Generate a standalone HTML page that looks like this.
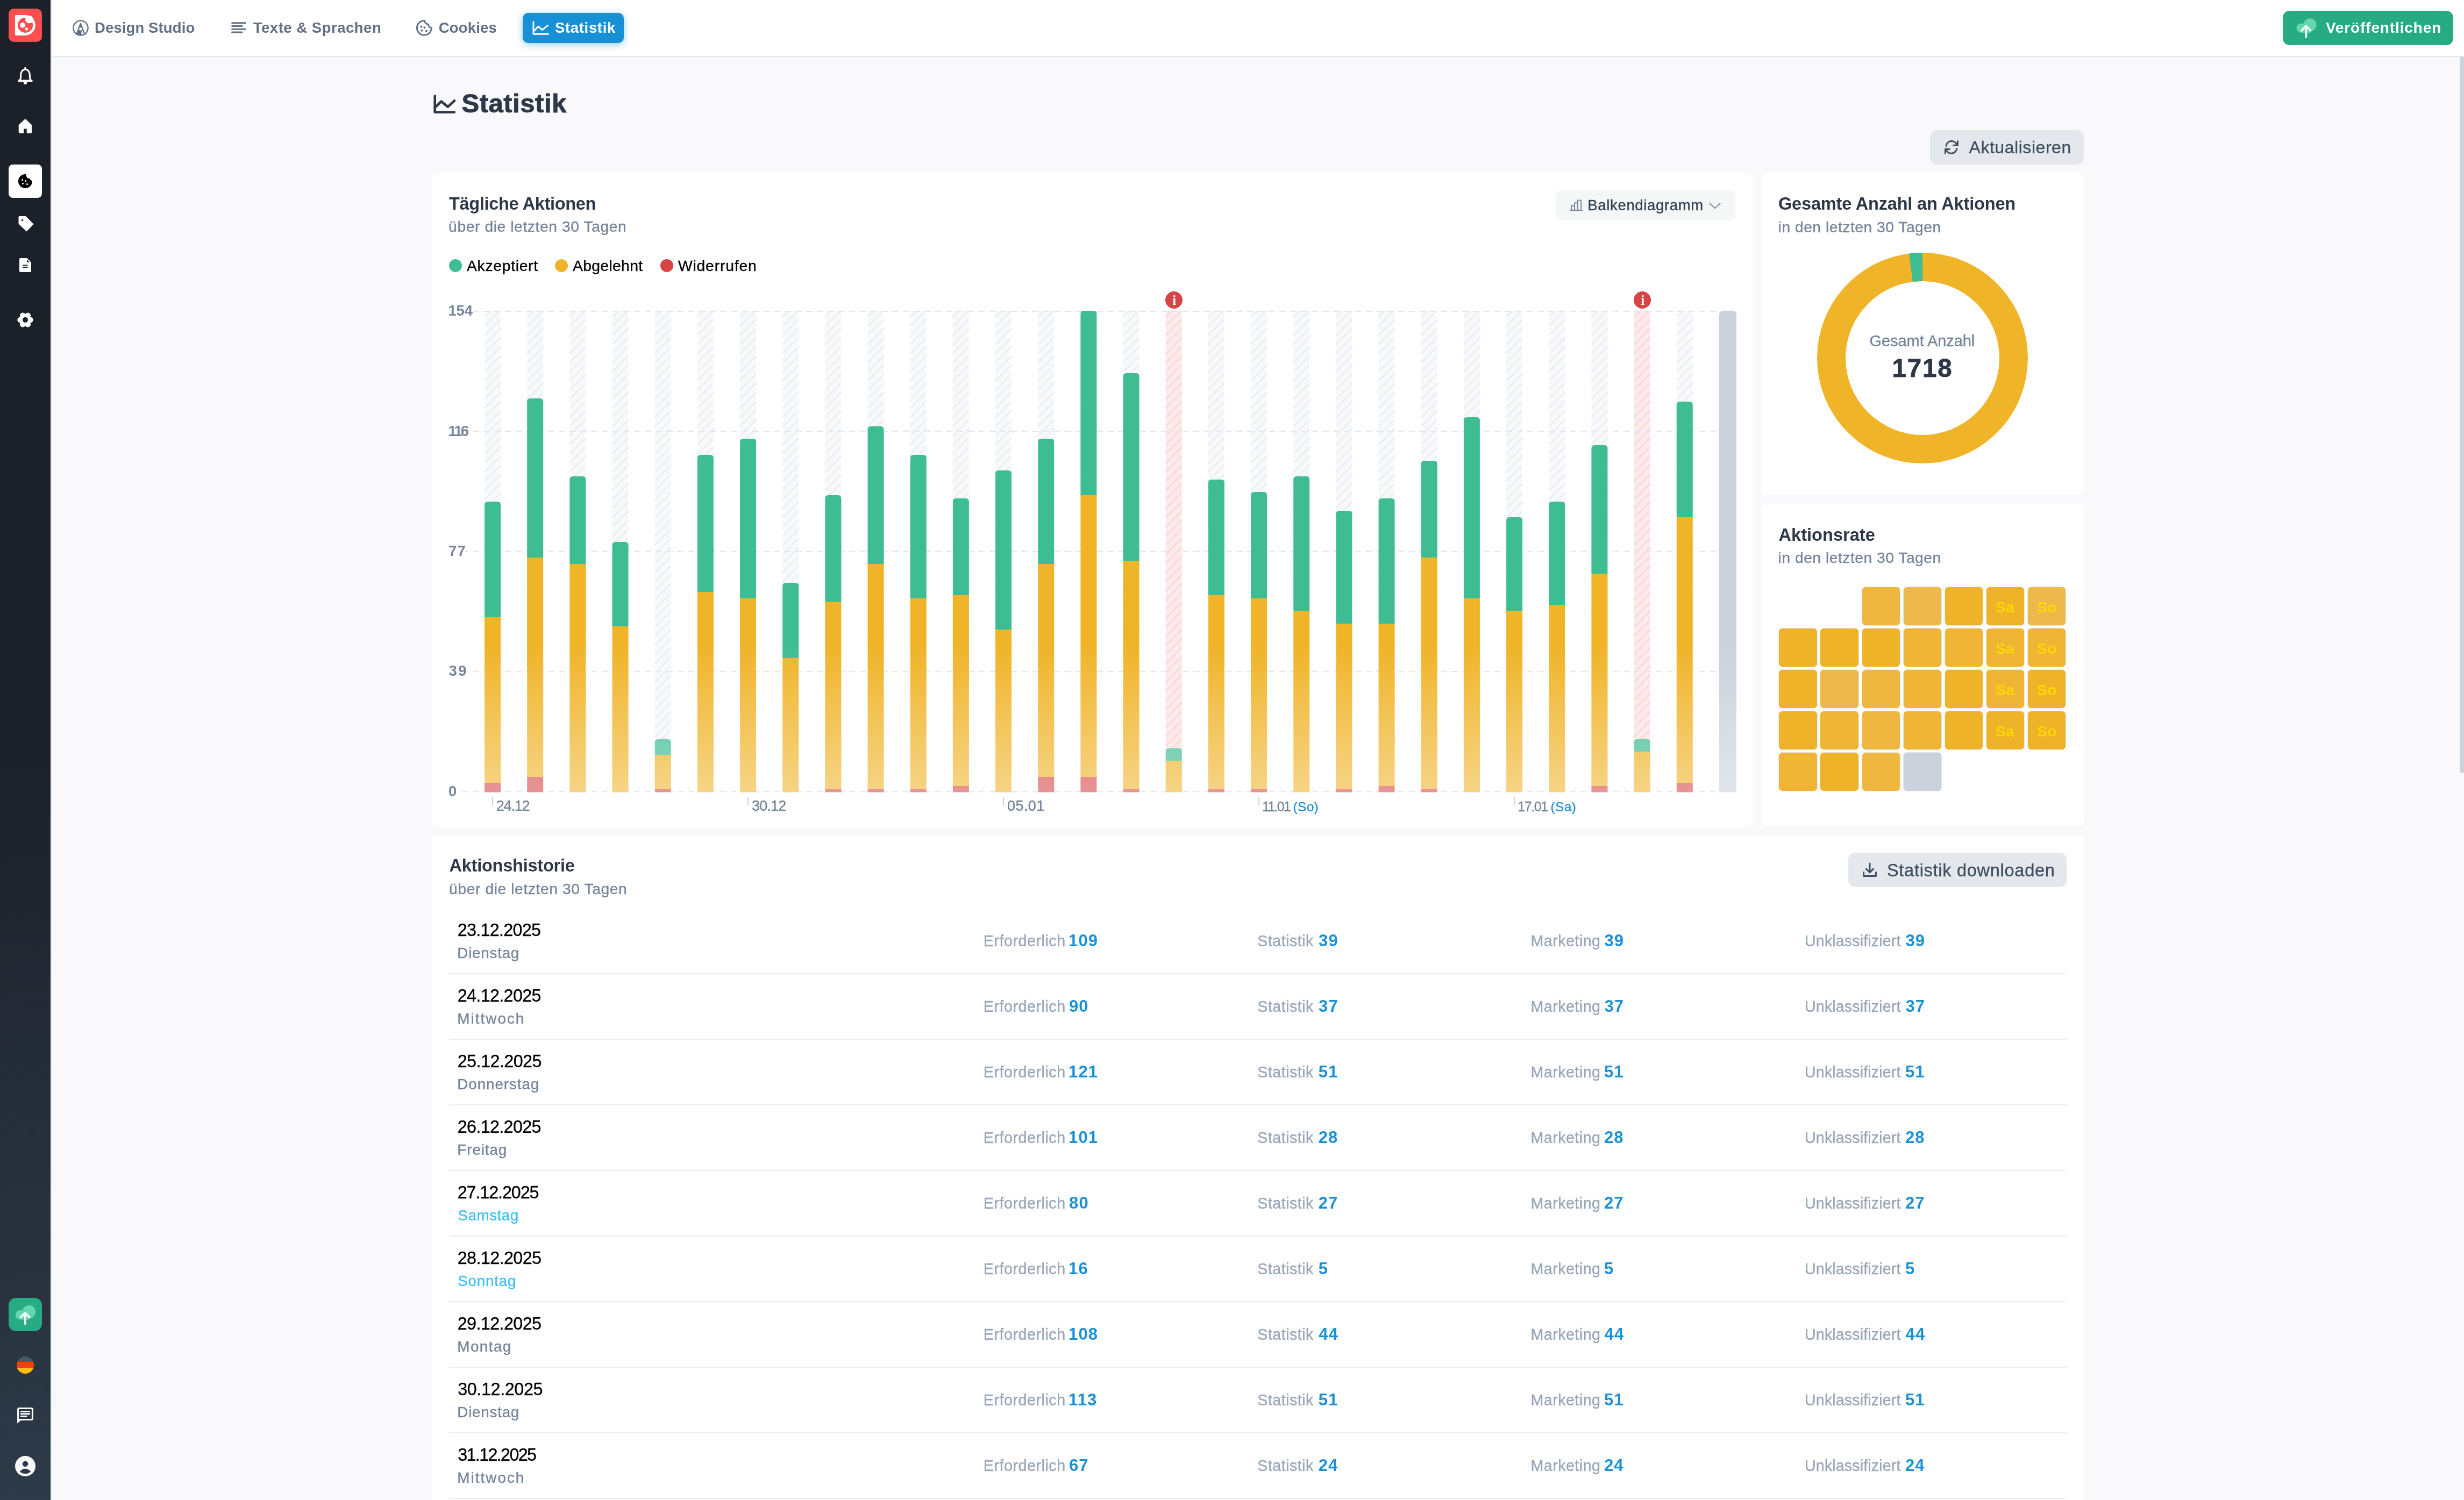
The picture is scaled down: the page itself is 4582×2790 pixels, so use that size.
<!DOCTYPE html>
<html lang="de">
<head>
<meta charset="utf-8">
<title>Statistik</title>
<style>
*{box-sizing:border-box}
html,body{margin:0;padding:0}
body{width:4582px;height:2790px;background:#f9f9fb;font-family:"Liberation Sans", sans-serif;position:relative}
#app{position:absolute;left:0;top:0;width:4582px;height:2790px;overflow:hidden;will-change:transform}
.t{position:absolute;white-space:pre;display:block}
.abs{position:absolute}
.card{position:absolute;background:#fff;border-radius:11px}
#sidebar{position:absolute;left:0;top:0;width:94px;height:2790px;background:linear-gradient(180deg,#1b2029 0%,#1b2029 48%,#2e3a48 100%)}
#sideline{position:absolute;left:94px;top:0;width:2px;height:2790px;background:#e9ecf1}
#topbar{position:absolute;left:96px;top:0;width:4486px;height:104px;background:#fff}
#topline{position:absolute;left:96px;top:104px;width:4486px;height:2px;background:#e2e8f0}
#scroll{position:absolute;left:4574px;top:106px;width:8px;height:1331px;background:#cbd2db}
.btn{position:absolute;border-radius:12px}
svg{position:absolute;overflow:visible}
.serif{font-family:"Liberation Serif",serif}
.sep{position:absolute;left:835px;width:3008px;height:2px;background:#eaedf2}
.cell{position:absolute;width:72.5px;height:72.5px;border-radius:7.5px;border:1.9px solid #e2e8f0}
</style>
</head>
<body>
<div id="app">
<nav id="sidebar"><svg style="left:16px;top:16px" width="62" height="62" viewBox="16 16 62 62">
<rect x="16" y="16" width="62" height="62" rx="10" fill="#fe4f50"/>
<path d="M30.5 28.1H47A18.9 18.9 0 0 1 47 65.9H30.5A2.6 2.6 0 0 1 27.9 63.3V30.7A2.6 2.6 0 0 1 30.5 28.1Z" fill="#fff"/>
<circle cx="47" cy="46.9" r="14.1" fill="#fe4f50"/>
<circle cx="54.4" cy="36.2" r="7.3" fill="#fff"/>
<circle cx="42.1" cy="46.9" r="4.9" fill="#fff"/>
<circle cx="49.5" cy="53.9" r="2.6" fill="#fff"/>
</svg><svg style="left:30px;top:120px" width="34" height="42" viewBox="30 120 34 42">
<circle cx="47" cy="126.6" r="1.9" fill="#fff"/>
<path d="M35.6 150.4Q38.6 147.6 38.6 143.5V139.5A8.4 10.6 0 0 1 55.4 139.5V143.5Q55.4 147.6 58.4 150.4" fill="none" stroke="#fff" stroke-width="3"/>
<rect x="33.5" y="148.5" width="27" height="3.5" rx="0.8" fill="#fff"/>
<circle cx="47" cy="153.8" r="3.2" fill="#fff"/>
</svg><svg style="left:30px;top:218px" width="34" height="34" viewBox="30 218 34 34">
<path d="M47 221.6 58.8 232.4V245.6A1.8 1.8 0 0 1 57 247.4H50.2V239H43.8V247.4H37A1.8 1.8 0 0 1 35.2 245.6V232.4Z" fill="#fff" stroke="#fff" stroke-width="1" stroke-linejoin="round"/>
</svg><svg style="left:16px;top:306px" width="62" height="62" viewBox="16 306 62 62">
<rect x="16" y="306" width="62" height="62" rx="8" fill="#fff"/>
<mask id="ckm" maskUnits="userSpaceOnUse" x="30" y="320" width="36" height="36">
<rect x="30" y="320" width="36" height="36" fill="#fff"/>
<circle cx="54.8" cy="325.6" r="6.4" fill="#000"/>
<circle cx="60.2" cy="331.6" r="4.6" fill="#000"/>
</mask>
<circle cx="47" cy="337" r="13" fill="#000" mask="url(#ckm)"/>
<circle cx="41.5" cy="334.5" r="1.6" fill="#fff"/><circle cx="47.5" cy="336.5" r="1.6" fill="#fff"/>
<circle cx="42.5" cy="341.5" r="1.6" fill="#fff"/><circle cx="50.5" cy="342.5" r="1.6" fill="#fff"/>
</svg><svg style="left:30px;top:398px" width="36" height="36" viewBox="30 398 36 36">
<path d="M36 402.5H48L62 417 49.5 430 35 416.5V403.5A1 1 0 0 1 36 402.5Z" fill="#fff" stroke="#fff" stroke-width="1" stroke-linejoin="round"/>
<circle cx="41.5" cy="409.5" r="1.7" fill="#1b2029"/>
</svg><svg style="left:32px;top:476px" width="30" height="34" viewBox="32 476 30 34">
<path d="M38 480H50L58 488V504A2 2 0 0 1 56 506H38A2 2 0 0 1 36 504V482A2 2 0 0 1 38 480Z" fill="#fff"/>
<path d="M50 483V488H55Z" fill="#1b2029"/>
<rect x="42" y="492.5" width="9.5" height="2" fill="#1b2029"/><rect x="42" y="496.5" width="9.5" height="2" fill="#1b2029"/>
</svg><svg style="left:30px;top:578px" width="34" height="34" viewBox="30 578 34 34">
<circle cx="47" cy="595" r="10.5" fill="#fff"/><circle cx="56.40" cy="595.00" r="5.3" fill="#fff"/><circle cx="51.70" cy="603.14" r="5.3" fill="#fff"/><circle cx="42.30" cy="603.14" r="5.3" fill="#fff"/><circle cx="37.60" cy="595.00" r="5.3" fill="#fff"/><circle cx="42.30" cy="586.86" r="5.3" fill="#fff"/><circle cx="51.70" cy="586.86" r="5.3" fill="#fff"/>
<circle cx="47" cy="595" r="5" fill="#1b2029"/>
</svg><svg style="left:16px;top:2414px" width="62" height="62" viewBox="16 2414 62 62">
<rect x="16" y="2414" width="62" height="62" rx="14" fill="#27ab83"/>
<circle cx="53.8" cy="2440" r="12.2" fill="#65d6ad"/><circle cx="37.6" cy="2445.6" r="8.8" fill="#65d6ad"/>
<rect x="37.6" y="2445" width="17" height="9.5" fill="#65d6ad"/>
<path d="M46.7 2462.3V2442M38.6 2450.2 46.7 2441.8 54.8 2450.2" fill="none" stroke="#effcf6" stroke-width="4" stroke-linecap="round" stroke-linejoin="round"/>
</svg><svg style="left:31px;top:2523px" width="32" height="32" viewBox="31 2523 32 32">
<clipPath id="fl"><circle cx="47" cy="2539" r="16"/></clipPath>
<g clip-path="url(#fl)"><rect x="31" y="2523" width="32" height="10.4" fill="#455a64"/><rect x="31" y="2533.4" width="32" height="10.8" fill="#ff3d00"/><rect x="31" y="2544.2" width="32" height="11" fill="#ffc107"/></g>
</svg><svg style="left:30px;top:2616px" width="34" height="34" viewBox="30 2616 34 34">
<rect x="33.6" y="2619.6" width="26.8" height="21" rx="2" fill="none" stroke="#fff" stroke-width="3"/>
<path d="M32.1 2639V2647.8L40 2640.6Z" fill="#fff"/>
<rect x="38" y="2624" width="18" height="2.9" fill="#fff"/><rect x="38" y="2628.4" width="18" height="2.9" fill="#fff"/><rect x="38" y="2633" width="12.2" height="3" fill="#fff"/>
</svg><svg style="left:28px;top:2708px" width="38" height="38" viewBox="28 2708 38 38">
<circle cx="47" cy="2727" r="19" fill="#f7f8fa"/>
<circle cx="47" cy="2722.7" r="5.3" fill="#2d3946"/>
<path d="M36.6 2737.2Q47 2726.4 57.4 2737.2Q47 2745 36.6 2737.2Z" fill="#2d3946"/>
</svg></nav><div id="sideline"></div><header id="topbar"></header><div id="topline"></div><div id="scroll"></div><svg style="left:133px;top:35px" width="34" height="34" viewBox="133 35 34 34">
<circle cx="150" cy="52" r="13.6" fill="none" stroke="#617083" stroke-width="2.3"/>
<path d="M142.8 62.9 149.8 43.9 157.1 62.6" fill="none" stroke="#617083" stroke-width="2.3" stroke-linejoin="round"/>
<path d="M149.8 43.2 146.4 51.2H153.3Z" fill="#617083"/>
<path d="M145 57.4Q147.8 55.6 150.5 58.2Q153.2 55.6 155.6 57.6" fill="none" stroke="#617083" stroke-width="2"/>
<path d="M144.6 57.2Q147.8 55.8 150.5 58.2V65.6A13.6 13.6 0 0 1 141.6 62.8Z" fill="#617083"/>
<path d="M150.5 58V65.4" fill="none" stroke="#617083" stroke-width="2"/>
</svg><span class="t" style="left:175.95px;top:37.62px;font-size:27.5px;line-height:27.5px;color:#617083;font-weight:700;letter-spacing:0.120px;">Design Studio</span><svg style="left:428px;top:40px" width="32" height="24" viewBox="428 40 32 24">
<path d="M431.6 42.7H456.3M431.6 48.5H450M431.6 54.3H456.3M431.6 60H450" stroke="#617083" stroke-width="3.1" stroke-linecap="round" fill="none"/>
</svg><span class="t" style="left:470.75px;top:37.62px;font-size:27.5px;line-height:27.5px;color:#617083;font-weight:700;letter-spacing:0.511px;">Texte &amp; Sprachen</span><svg style="left:772px;top:35px" width="34" height="34" viewBox="772 35 34 34">
<path d="M789.7 38.4A13.5 13.5 0 1 0 802.4 51.6A6.1 6.1 0 0 1 796.5 45.3A6.9 6.9 0 0 1 789.7 38.4Z" fill="none" stroke="#617083" stroke-width="2.9" stroke-linejoin="round"/>
<circle cx="783.3" cy="49.6" r="2" fill="#617083"/><circle cx="789.4" cy="51.2" r="2" fill="#617083"/>
<circle cx="784.3" cy="56.8" r="2" fill="#617083"/><circle cx="792.8" cy="57.8" r="2" fill="#617083"/>
</svg><span class="t" style="left:815.67px;top:37.62px;font-size:27.5px;line-height:27.5px;color:#617083;font-weight:700;letter-spacing:0.198px;">Cookies</span><div class="btn" style="left:972px;top:24px;width:188px;height:56px;background:#1890d5;border-radius:10px;box-shadow:0 3px 14px rgba(24,144,213,.45)"></div><svg style="left:988px;top:37px" width="36" height="30" viewBox="988 37 36 30">
<path d="M991.9 40.6V63.3H1019.5M993 57.5 1001 49.2 1008.3 55.6 1018.7 47.3" fill="none" stroke="#fff" stroke-width="2.9" stroke-linecap="round" stroke-linejoin="round"/>
</svg><span class="t" style="left:1031.95px;top:38.02px;font-size:27.5px;line-height:27.5px;color:#fff;font-weight:700;letter-spacing:0.674px;">Statistik</span><div class="btn" style="left:4245px;top:20px;width:317px;height:64px;background:#27ab83;border-radius:13px"></div><svg style="left:4268px;top:32px" width="42" height="42" viewBox="4268 32 42 42">
<circle cx="4295.4" cy="46.4" r="12.2" fill="#65d6ad"/><circle cx="4279.2" cy="52" r="8.8" fill="#65d6ad"/>
<rect x="4279.2" y="51.4" width="17" height="9.5" fill="#65d6ad"/>
<path d="M4288.3 69V48.6M4280.1 56.8 4288.3 48.2 4296.6 56.8" fill="none" stroke="#effcf6" stroke-width="4" stroke-linecap="round" stroke-linejoin="round"/>
</svg><span class="t" style="left:4324.88px;top:37.60px;font-size:28px;line-height:28px;color:#fff;font-weight:700;letter-spacing:0.864px;">Veröffentlichen</span><svg style="left:803px;top:173px" width="48" height="42" viewBox="803 173 48 42">
<path d="M808.7 178.5V208.8H844.9M810.5 198.6 820.4 188.6 832.9 198.6 845.2 187.3" fill="none" stroke="#2d3748" stroke-width="4.6" stroke-linecap="round" stroke-linejoin="round"/>
</svg><span class="t" style="left:858.43px;top:168.12px;font-size:49px;line-height:49px;color:#2d3748;font-weight:700;letter-spacing:0.530px;-webkit-text-stroke:0.9px #2d3748;">Statistik</span><div class="btn" style="left:3589px;top:242px;width:286px;height:64px;background:#e4e8ed;border-radius:13px"></div><svg style="left:3612px;top:258px" width="34" height="32" viewBox="3612 258 34 32">
<path d="M3619 271.2A10.3 10.3 0 0 1 3638.6 268.6M3638.8 276.6A10.3 10.3 0 0 1 3619.2 279.2" fill="none" stroke="#3d4d5e" stroke-width="3" stroke-linecap="round"/>
<path d="M3640.4 262.6V270.2H3632.8M3617.4 285.2V277.6H3625" fill="none" stroke="#3d4d5e" stroke-width="3" stroke-linecap="round" stroke-linejoin="round"/>
</svg><span class="t" style="left:3661.50px;top:258.21px;font-size:32px;line-height:32px;color:#3d4d5e;letter-spacing:0.545px;-webkit-text-stroke:0.35px #3d4d5e;">Aktualisieren</span><section class="card" style="left:803px;top:322px;width:2456px;height:1216px"></section><span class="t" style="left:835.00px;top:362.79px;font-size:32.5px;line-height:32.5px;color:#2d3748;font-weight:700;letter-spacing:-0.333px;">Tägliche Aktionen</span><span class="t" style="left:834.12px;top:407.43px;font-size:28.2px;line-height:28.2px;color:#75849a;letter-spacing:0.604px;-webkit-text-stroke:0.35px #75849a;">über die letzten 30 Tagen</span><div class="abs" style="left:835px;top:482px;width:24px;height:24px;border-radius:50%;background:#3ebd93"></div><span class="t" style="left:868.00px;top:479.54px;font-size:28.3px;line-height:28.3px;color:#000;letter-spacing:0.699px;-webkit-text-stroke:0.35px #000;">Akzeptiert</span><div class="abs" style="left:1031.5px;top:482px;width:24px;height:24px;border-radius:50%;background:#f0b429"></div><span class="t" style="left:1065.00px;top:479.54px;font-size:28.3px;line-height:28.3px;color:#000;letter-spacing:0.332px;-webkit-text-stroke:0.35px #000;">Abgelehnt</span><div class="abs" style="left:1228px;top:482px;width:24px;height:24px;border-radius:50%;background:#d64545"></div><span class="t" style="left:1260.88px;top:479.54px;font-size:28.3px;line-height:28.3px;color:#000;letter-spacing:0.829px;-webkit-text-stroke:0.35px #000;">Widerrufen</span><div class="btn" style="left:2893px;top:354px;width:334px;height:56px;background:#f5f7f7;border-radius:10px"></div><svg style="left:2917px;top:369px" width="28" height="26" viewBox="2917 369 28 26">
<path d="M2919.6 391H2942.8M2922 391V382.9H2927.9M2927.9 391V377.5H2933.8M2933.8 391V372.4H2940V391" fill="none" stroke="#75849a" stroke-width="1.9" stroke-linejoin="round"/>
</svg><span class="t" style="left:2952.25px;top:367.82px;font-size:27.5px;line-height:27.5px;color:#2f3e4f;letter-spacing:0.668px;-webkit-text-stroke:0.35px #2f3e4f;">Balkendiagramm</span><svg style="left:3176px;top:374px" width="26" height="18" viewBox="3176 374 26 18">
<path d="M3179.6 378.4 3189.1 387.4 3198.6 378.4" fill="none" stroke="#8a99ab" stroke-width="2.2" stroke-linecap="round" stroke-linejoin="round"/>
</svg><svg style="left:803px;top:322px" width="2456" height="1216" viewBox="803 322 2456 1216"><defs>
<pattern id="hg" patternUnits="userSpaceOnUse" width="16.97" height="16.97" patternTransform="translate(0 -5.2)">
<rect width="16.97" height="16.97" fill="#f8f9fb"/><path d="M-2 2 2 -2M-2 18.97 18.97 -2M14.969999999999999 18.97 18.97 14.969999999999999" stroke="#e4e8ec" stroke-width="1.7"/></pattern>
<pattern id="hr" patternUnits="userSpaceOnUse" width="16.97" height="16.97" patternTransform="translate(0 -5.2)">
<rect width="16.97" height="16.97" fill="#fdeaea"/><path d="M-2 2 2 -2M-2 18.97 18.97 -2M14.969999999999999 18.97 18.97 14.969999999999999" stroke="#facdcd" stroke-width="1.7"/></pattern>
<linearGradient id="gG" gradientUnits="userSpaceOnUse" x1="0" y1="1200" x2="0" y2="1473.5"><stop offset="0" stop-color="#3ebd93"/><stop offset="1" stop-color="#91d9c1"/></linearGradient><linearGradient id="gY" gradientUnits="userSpaceOnUse" x1="0" y1="1200" x2="0" y2="1473.5"><stop offset="0" stop-color="#f0b429"/><stop offset="1" stop-color="#f6d485"/></linearGradient><linearGradient id="gR" gradientUnits="userSpaceOnUse" x1="0" y1="1200" x2="0" y2="1473.5"><stop offset="0" stop-color="#d64545"/><stop offset="1" stop-color="#e89595"/></linearGradient><linearGradient id="gS" gradientUnits="userSpaceOnUse" x1="0" y1="1200" x2="0" y2="1473.5"><stop offset="0" stop-color="#cbd2dc"/><stop offset="1" stop-color="#e1e5eb"/></linearGradient>
</defs><g transform="translate(901.00 578)"><rect width="30" height="895.5" fill="url(#hg)"/></g><g transform="translate(980.17 578)"><rect width="30" height="895.5" fill="url(#hg)"/></g><g transform="translate(1059.34 578)"><rect width="30" height="895.5" fill="url(#hg)"/></g><g transform="translate(1138.51 578)"><rect width="30" height="895.5" fill="url(#hg)"/></g><g transform="translate(1217.68 578)"><rect width="30" height="895.5" fill="url(#hg)"/></g><g transform="translate(1296.85 578)"><rect width="30" height="895.5" fill="url(#hg)"/></g><g transform="translate(1376.02 578)"><rect width="30" height="895.5" fill="url(#hg)"/></g><g transform="translate(1455.19 578)"><rect width="30" height="895.5" fill="url(#hg)"/></g><g transform="translate(1534.36 578)"><rect width="30" height="895.5" fill="url(#hg)"/></g><g transform="translate(1613.53 578)"><rect width="30" height="895.5" fill="url(#hg)"/></g><g transform="translate(1692.70 578)"><rect width="30" height="895.5" fill="url(#hg)"/></g><g transform="translate(1771.87 578)"><rect width="30" height="895.5" fill="url(#hg)"/></g><g transform="translate(1851.04 578)"><rect width="30" height="895.5" fill="url(#hg)"/></g><g transform="translate(1930.21 578)"><rect width="30" height="895.5" fill="url(#hg)"/></g><g transform="translate(2009.38 578)"><rect width="30" height="895.5" fill="url(#hg)"/></g><g transform="translate(2088.55 578)"><rect width="30" height="895.5" fill="url(#hg)"/></g><g transform="translate(2167.72 578)"><rect width="30" height="895.5" fill="url(#hr)"/></g><g transform="translate(2246.89 578)"><rect width="30" height="895.5" fill="url(#hg)"/></g><g transform="translate(2326.06 578)"><rect width="30" height="895.5" fill="url(#hg)"/></g><g transform="translate(2405.23 578)"><rect width="30" height="895.5" fill="url(#hg)"/></g><g transform="translate(2484.40 578)"><rect width="30" height="895.5" fill="url(#hg)"/></g><g transform="translate(2563.57 578)"><rect width="30" height="895.5" fill="url(#hg)"/></g><g transform="translate(2642.74 578)"><rect width="30" height="895.5" fill="url(#hg)"/></g><g transform="translate(2721.91 578)"><rect width="30" height="895.5" fill="url(#hg)"/></g><g transform="translate(2801.08 578)"><rect width="30" height="895.5" fill="url(#hg)"/></g><g transform="translate(2880.25 578)"><rect width="30" height="895.5" fill="url(#hg)"/></g><g transform="translate(2959.42 578)"><rect width="30" height="895.5" fill="url(#hg)"/></g><g transform="translate(3038.59 578)"><rect width="30" height="895.5" fill="url(#hr)"/></g><g transform="translate(3117.76 578)"><rect width="30" height="895.5" fill="url(#hg)"/></g><path d="M879.9 579.00H3192" stroke="#e2e7ee" stroke-width="2" stroke-dasharray="12 8" stroke-dashoffset="0.9" fill="none"/><path d="M872 802.40H3192" stroke="#e2e7ee" stroke-width="2" stroke-dasharray="12 8" stroke-dashoffset="13.0" fill="none"/><path d="M865 1025.80H3192" stroke="#e2e7ee" stroke-width="2" stroke-dasharray="12 8" stroke-dashoffset="6.0" fill="none"/><path d="M869 1249.20H3192" stroke="#e2e7ee" stroke-width="2" stroke-dasharray="12 8" stroke-dashoffset="10.0" fill="none"/><path d="M855 1472.60H3192" stroke="#e2e7ee" stroke-width="2" stroke-dasharray="12 8" stroke-dashoffset="16.0" fill="none"/><g><path d="M901.00 1148V939Q901.00 933 907.00 933H925.00Q931.00 933 931.00 939V1148Z" fill="url(#gG)"/><rect x="901.00" y="1148" width="30" height="308" fill="url(#gY)"/><rect x="901.00" y="1456" width="30" height="17.5" fill="url(#gR)"/><path d="M980.17 1037V747Q980.17 741 986.17 741H1004.17Q1010.17 741 1010.17 747V1037Z" fill="url(#gG)"/><rect x="980.17" y="1037" width="30" height="408" fill="url(#gY)"/><rect x="980.17" y="1445" width="30" height="28.5" fill="url(#gR)"/><path d="M1059.34 1049V892Q1059.34 886 1065.34 886H1083.34Q1089.34 886 1089.34 892V1049Z" fill="url(#gG)"/><rect x="1059.34" y="1049" width="30" height="424.5" fill="url(#gY)"/><path d="M1138.51 1165V1014Q1138.51 1008 1144.51 1008H1162.51Q1168.51 1008 1168.51 1014V1165Z" fill="url(#gG)"/><rect x="1138.51" y="1165" width="30" height="308.5" fill="url(#gY)"/><path d="M1217.68 1404V1381Q1217.68 1375 1223.68 1375H1241.68Q1247.68 1375 1247.68 1381V1404Z" fill="url(#gG)"/><rect x="1217.68" y="1404" width="30" height="64" fill="url(#gY)"/><rect x="1217.68" y="1468" width="30" height="5.5" fill="url(#gR)"/><path d="M1296.85 1101V852Q1296.85 846 1302.85 846H1320.85Q1326.85 846 1326.85 852V1101Z" fill="url(#gG)"/><rect x="1296.85" y="1101" width="30" height="372.5" fill="url(#gY)"/><path d="M1376.02 1113V822Q1376.02 816 1382.02 816H1400.02Q1406.02 816 1406.02 822V1113Z" fill="url(#gG)"/><rect x="1376.02" y="1113" width="30" height="360.5" fill="url(#gY)"/><path d="M1455.19 1224V1090Q1455.19 1084 1461.19 1084H1479.19Q1485.19 1084 1485.19 1090V1224Z" fill="url(#gG)"/><rect x="1455.19" y="1224" width="30" height="249.5" fill="url(#gY)"/><path d="M1534.36 1119V927Q1534.36 921 1540.36 921H1558.36Q1564.36 921 1564.36 927V1119Z" fill="url(#gG)"/><rect x="1534.36" y="1119" width="30" height="349" fill="url(#gY)"/><rect x="1534.36" y="1468" width="30" height="5.5" fill="url(#gR)"/><path d="M1613.53 1049V799Q1613.53 793 1619.53 793H1637.53Q1643.53 793 1643.53 799V1049Z" fill="url(#gG)"/><rect x="1613.53" y="1049" width="30" height="419" fill="url(#gY)"/><rect x="1613.53" y="1468" width="30" height="5.5" fill="url(#gR)"/><path d="M1692.70 1113V852Q1692.70 846 1698.70 846H1716.70Q1722.70 846 1722.70 852V1113Z" fill="url(#gG)"/><rect x="1692.70" y="1113" width="30" height="355" fill="url(#gY)"/><rect x="1692.70" y="1468" width="30" height="5.5" fill="url(#gR)"/><path d="M1771.87 1107V933Q1771.87 927 1777.87 927H1795.87Q1801.87 927 1801.87 933V1107Z" fill="url(#gG)"/><rect x="1771.87" y="1107" width="30" height="355" fill="url(#gY)"/><rect x="1771.87" y="1462" width="30" height="11.5" fill="url(#gR)"/><path d="M1851.04 1171V881Q1851.04 875 1857.04 875H1875.04Q1881.04 875 1881.04 881V1171Z" fill="url(#gG)"/><rect x="1851.04" y="1171" width="30" height="302.5" fill="url(#gY)"/><path d="M1930.21 1049V822Q1930.21 816 1936.21 816H1954.21Q1960.21 816 1960.21 822V1049Z" fill="url(#gG)"/><rect x="1930.21" y="1049" width="30" height="396" fill="url(#gY)"/><rect x="1930.21" y="1445" width="30" height="28.5" fill="url(#gR)"/><path d="M2009.38 921V584Q2009.38 578 2015.38 578H2033.38Q2039.38 578 2039.38 584V921Z" fill="url(#gG)"/><rect x="2009.38" y="921" width="30" height="524" fill="url(#gY)"/><rect x="2009.38" y="1445" width="30" height="28.5" fill="url(#gR)"/><path d="M2088.55 1043V700Q2088.55 694 2094.55 694H2112.55Q2118.55 694 2118.55 700V1043Z" fill="url(#gG)"/><rect x="2088.55" y="1043" width="30" height="425" fill="url(#gY)"/><rect x="2088.55" y="1468" width="30" height="5.5" fill="url(#gR)"/><path d="M2167.72 1415V1398Q2167.72 1392 2173.72 1392H2191.72Q2197.72 1392 2197.72 1398V1415Z" fill="url(#gG)"/><rect x="2167.72" y="1415" width="30" height="58.5" fill="url(#gY)"/><path d="M2246.89 1107V898Q2246.89 892 2252.89 892H2270.89Q2276.89 892 2276.89 898V1107Z" fill="url(#gG)"/><rect x="2246.89" y="1107" width="30" height="361" fill="url(#gY)"/><rect x="2246.89" y="1468" width="30" height="5.5" fill="url(#gR)"/><path d="M2326.06 1113V921Q2326.06 915 2332.06 915H2350.06Q2356.06 915 2356.06 921V1113Z" fill="url(#gG)"/><rect x="2326.06" y="1113" width="30" height="355" fill="url(#gY)"/><rect x="2326.06" y="1468" width="30" height="5.5" fill="url(#gR)"/><path d="M2405.23 1136V892Q2405.23 886 2411.23 886H2429.23Q2435.23 886 2435.23 892V1136Z" fill="url(#gG)"/><rect x="2405.23" y="1136" width="30" height="337.5" fill="url(#gY)"/><path d="M2484.40 1160V956Q2484.40 950 2490.40 950H2508.40Q2514.40 950 2514.40 956V1160Z" fill="url(#gG)"/><rect x="2484.40" y="1160" width="30" height="308" fill="url(#gY)"/><rect x="2484.40" y="1468" width="30" height="5.5" fill="url(#gR)"/><path d="M2563.57 1160V933Q2563.57 927 2569.57 927H2587.57Q2593.57 927 2593.57 933V1160Z" fill="url(#gG)"/><rect x="2563.57" y="1160" width="30" height="302" fill="url(#gY)"/><rect x="2563.57" y="1462" width="30" height="11.5" fill="url(#gR)"/><path d="M2642.74 1037V863Q2642.74 857 2648.74 857H2666.74Q2672.74 857 2672.74 863V1037Z" fill="url(#gG)"/><rect x="2642.74" y="1037" width="30" height="431" fill="url(#gY)"/><rect x="2642.74" y="1468" width="30" height="5.5" fill="url(#gR)"/><path d="M2721.91 1113V782Q2721.91 776 2727.91 776H2745.91Q2751.91 776 2751.91 782V1113Z" fill="url(#gG)"/><rect x="2721.91" y="1113" width="30" height="360.5" fill="url(#gY)"/><path d="M2801.08 1136V968Q2801.08 962 2807.08 962H2825.08Q2831.08 962 2831.08 968V1136Z" fill="url(#gG)"/><rect x="2801.08" y="1136" width="30" height="337.5" fill="url(#gY)"/><path d="M2880.25 1125V939Q2880.25 933 2886.25 933H2904.25Q2910.25 933 2910.25 939V1125Z" fill="url(#gG)"/><rect x="2880.25" y="1125" width="30" height="348.5" fill="url(#gY)"/><path d="M2959.42 1067V834Q2959.42 828 2965.42 828H2983.42Q2989.42 828 2989.42 834V1067Z" fill="url(#gG)"/><rect x="2959.42" y="1067" width="30" height="395" fill="url(#gY)"/><rect x="2959.42" y="1462" width="30" height="11.5" fill="url(#gR)"/><path d="M3038.59 1398V1381Q3038.59 1375 3044.59 1375H3062.59Q3068.59 1375 3068.59 1381V1398Z" fill="url(#gG)"/><rect x="3038.59" y="1398" width="30" height="75.5" fill="url(#gY)"/><path d="M3117.76 962V753Q3117.76 747 3123.76 747H3141.76Q3147.76 747 3147.76 753V962Z" fill="url(#gG)"/><rect x="3117.76" y="962" width="30" height="494" fill="url(#gY)"/><rect x="3117.76" y="1456" width="30" height="17.5" fill="url(#gR)"/><path d="M3197 1473.5V586Q3197 578 3205 578H3221Q3229 578 3229 586V1473.5Z" fill="url(#gS)"/></g><path d="M916.00 1482V1498" stroke="#cdd3dd" stroke-width="2"/><path d="M1391.02 1482V1498" stroke="#cdd3dd" stroke-width="2"/><path d="M1866.04 1482V1498" stroke="#cdd3dd" stroke-width="2"/><path d="M2341.06 1482V1498" stroke="#cdd3dd" stroke-width="2"/><path d="M2816.08 1482V1498" stroke="#cdd3dd" stroke-width="2"/><circle cx="2183" cy="558" r="16" fill="#d64545"/><circle cx="3054" cy="558" r="16" fill="#d64545"/></svg><span class="t serif" style="left:2180.16px;top:545.94px;font-size:25px;line-height:25px;color:#fff;font-weight:700;">i</span><span class="t serif" style="left:3051.16px;top:545.94px;font-size:25px;line-height:25px;color:#fff;font-weight:700;">i</span><span class="t" style="left:833.48px;top:564.11px;font-size:27.4px;line-height:27.4px;color:#75849a;font-weight:700;letter-spacing:-0.088px;">154</span><span class="t" style="left:833.48px;top:787.51px;font-size:27.4px;line-height:27.4px;color:#75849a;font-weight:700;letter-spacing:-2.794px;">116</span><span class="t" style="left:833.98px;top:1010.91px;font-size:27.4px;line-height:27.4px;color:#75849a;font-weight:700;letter-spacing:1.262px;">77</span><span class="t" style="left:834.48px;top:1234.31px;font-size:27.4px;line-height:27.4px;color:#75849a;font-weight:700;letter-spacing:2.637px;">39</span><span class="t" style="left:834.10px;top:1457.71px;font-size:27.4px;line-height:27.4px;color:#75849a;font-weight:700;">0</span><span class="t" style="left:922.75px;top:1486.44px;font-size:27px;line-height:27px;color:#75849a;letter-spacing:-1.187px;-webkit-text-stroke:0.35px #75849a;">24.12</span><span class="t" style="left:1398.02px;top:1486.44px;font-size:27px;line-height:27px;color:#75849a;letter-spacing:-0.825px;-webkit-text-stroke:0.35px #75849a;">30.12</span><span class="t" style="left:1873.04px;top:1486.44px;font-size:27px;line-height:27px;color:#75849a;letter-spacing:0.425px;-webkit-text-stroke:0.35px #75849a;">05.01</span><span class="t" style="left:2347.18px;top:1488.14px;font-size:25px;line-height:25px;color:#75849a;letter-spacing:-1.794px;-webkit-text-stroke:0.35px #75849a;">11.01</span><span class="t" style="left:2404.62px;top:1488.98px;font-size:24px;line-height:24px;color:#1a91d6;letter-spacing:0.634px;-webkit-text-stroke:0.35px #1a91d6;">(So)</span><span class="t" style="left:2822.20px;top:1488.14px;font-size:25px;line-height:25px;color:#75849a;letter-spacing:-1.383px;-webkit-text-stroke:0.35px #75849a;">17.01</span><span class="t" style="left:2883.62px;top:1488.98px;font-size:24px;line-height:24px;color:#1a91d6;letter-spacing:0.634px;-webkit-text-stroke:0.35px #1a91d6;">(Sa)</span><section class="card" style="left:3275px;top:322px;width:600px;height:599px"></section><span class="t" style="left:3306.98px;top:362.79px;font-size:32.5px;line-height:32.5px;color:#2d3748;font-weight:700;letter-spacing:-0.172px;">Gesamte Anzahl an Aktionen</span><span class="t" style="left:3306.62px;top:408.43px;font-size:28.2px;line-height:28.2px;color:#75849a;letter-spacing:0.526px;-webkit-text-stroke:0.35px #75849a;">in den letzten 30 Tagen</span><svg style="left:3375px;top:466px" width="400" height="400" viewBox="3375 466 400 400">
<circle cx="3575" cy="666" r="169.5" fill="none" stroke="#f0b429" stroke-width="53"/>
<path d="M3553.46 497.87A169.5 169.5 0 0 1 3575 496.5" fill="none" stroke="#3ebd93" stroke-width="53"/>
</svg><span class="t" style="left:3476.62px;top:619.75px;font-size:29px;line-height:29px;color:#75849a;letter-spacing:-0.089px;-webkit-text-stroke:0.35px #75849a;">Gesamt Anzahl</span><span class="t" style="left:3518.53px;top:661.09px;font-size:47.5px;line-height:47.5px;color:#2d3748;font-weight:700;letter-spacing:1.828px;-webkit-text-stroke:0.8px #2d3748;">1718</span><section class="card" style="left:3275px;top:938px;width:600px;height:599px"></section><span class="t" style="left:3307.49px;top:978.79px;font-size:32.5px;line-height:32.5px;color:#2d3748;font-weight:700;letter-spacing:0.052px;">Aktionsrate</span><span class="t" style="left:3306.62px;top:1023.43px;font-size:28.2px;line-height:28.2px;color:#75849a;letter-spacing:0.526px;-webkit-text-stroke:0.35px #75849a;">in den letzten 30 Tagen</span><div class="cell" style="left:3461.5px;top:1091.0px;background:#efb740"></div><div class="cell" style="left:3538.6px;top:1091.0px;background:#eeb94b"></div><div class="cell" style="left:3615.7px;top:1091.0px;background:#efb32a"></div><div class="cell" style="left:3692.8px;top:1091.0px;background:#efb32a"></div><span class="t" style="left:3711.06px;top:1114.77px;font-size:28.5px;line-height:28.5px;color:#ffd600;font-weight:700;">Sa</span><div class="cell" style="left:3769.9px;top:1091.0px;background:#eeb94b"></div><span class="t" style="left:3788.03px;top:1114.77px;font-size:28.5px;line-height:28.5px;color:#ffd600;font-weight:700;">So</span><div class="cell" style="left:3307.3px;top:1168.1px;background:#efb32a"></div><div class="cell" style="left:3384.4px;top:1168.1px;background:#efb32a"></div><div class="cell" style="left:3461.5px;top:1168.1px;background:#efb32a"></div><div class="cell" style="left:3538.6px;top:1168.1px;background:#f0b535"></div><div class="cell" style="left:3615.7px;top:1168.1px;background:#f0b535"></div><div class="cell" style="left:3692.8px;top:1168.1px;background:#f0b535"></div><span class="t" style="left:3711.06px;top:1191.87px;font-size:28.5px;line-height:28.5px;color:#ffd600;font-weight:700;">Sa</span><div class="cell" style="left:3769.9px;top:1168.1px;background:#f0b535"></div><span class="t" style="left:3788.03px;top:1191.87px;font-size:28.5px;line-height:28.5px;color:#ffd600;font-weight:700;">So</span><div class="cell" style="left:3307.3px;top:1245.2px;background:#efb32a"></div><div class="cell" style="left:3384.4px;top:1245.2px;background:#eeb94b"></div><div class="cell" style="left:3461.5px;top:1245.2px;background:#efb740"></div><div class="cell" style="left:3538.6px;top:1245.2px;background:#f0b535"></div><div class="cell" style="left:3615.7px;top:1245.2px;background:#efb32a"></div><div class="cell" style="left:3692.8px;top:1245.2px;background:#f0b535"></div><span class="t" style="left:3711.06px;top:1268.97px;font-size:28.5px;line-height:28.5px;color:#ffd600;font-weight:700;">Sa</span><div class="cell" style="left:3769.9px;top:1245.2px;background:#efb32a"></div><span class="t" style="left:3788.03px;top:1268.97px;font-size:28.5px;line-height:28.5px;color:#ffd600;font-weight:700;">So</span><div class="cell" style="left:3307.3px;top:1322.3px;background:#efb32a"></div><div class="cell" style="left:3384.4px;top:1322.3px;background:#f0b535"></div><div class="cell" style="left:3461.5px;top:1322.3px;background:#efb740"></div><div class="cell" style="left:3538.6px;top:1322.3px;background:#f0b535"></div><div class="cell" style="left:3615.7px;top:1322.3px;background:#efb32a"></div><div class="cell" style="left:3692.8px;top:1322.3px;background:#efb32a"></div><span class="t" style="left:3711.06px;top:1346.07px;font-size:28.5px;line-height:28.5px;color:#ffd600;font-weight:700;">Sa</span><div class="cell" style="left:3769.9px;top:1322.3px;background:#efb32a"></div><span class="t" style="left:3788.03px;top:1346.07px;font-size:28.5px;line-height:28.5px;color:#ffd600;font-weight:700;">So</span><div class="cell" style="left:3307.3px;top:1399.4px;background:#f0b535"></div><div class="cell" style="left:3384.4px;top:1399.4px;background:#efb32a"></div><div class="cell" style="left:3461.5px;top:1399.4px;background:#efb740"></div><div class="cell" style="left:3538.6px;top:1399.4px;background:#cbd2dc"></div><section class="card" style="left:803px;top:1554px;width:3072px;height:1300px"></section><span class="t" style="left:835.49px;top:1594.29px;font-size:32.5px;line-height:32.5px;color:#2d3748;font-weight:700;letter-spacing:-0.232px;">Aktionshistorie</span><span class="t" style="left:835.12px;top:1639.43px;font-size:28.2px;line-height:28.2px;color:#75849a;letter-spacing:0.604px;-webkit-text-stroke:0.35px #75849a;">über die letzten 30 Tagen</span><div class="btn" style="left:3437px;top:1586px;width:406px;height:64px;background:#e4e8ed;border-radius:13px"></div><svg style="left:3460px;top:1602px" width="34" height="32" viewBox="3460 1602 34 32">
<path d="M3477 1606V1622M3470.4 1616.2 3477 1622.6 3483.6 1616.2M3465.6 1622.5V1629.4H3488.4V1622.5" fill="none" stroke="#3d4d5e" stroke-width="3" stroke-linecap="round" stroke-linejoin="round"/>
</svg><span class="t" style="left:3508.98px;top:1602.79px;font-size:32.5px;line-height:32.5px;color:#3d4d5e;letter-spacing:0.723px;-webkit-text-stroke:0.35px #3d4d5e;">Statistik downloaden</span><span class="t" style="left:850.69px;top:1713.96px;font-size:32.3px;line-height:32.3px;color:#000;letter-spacing:-0.715px;-webkit-text-stroke:0.35px #000;">23.12.2025</span><span class="t" style="left:850.35px;top:1759.27px;font-size:27.8px;line-height:27.8px;color:#75849a;letter-spacing:0.749px;-webkit-text-stroke:0.35px #75849a;">Dienstag</span><span class="t" style="left:1828.85px;top:1735.59px;font-size:28.6px;line-height:28.6px;color:#98a6b8;letter-spacing:0.546px;-webkit-text-stroke:0.35px #98a6b8;">Erforderlich</span><span class="t" style="left:1987.12px;top:1733.56px;font-size:31px;line-height:31px;color:#1a91d6;font-weight:700;letter-spacing:1.100px;">109</span><span class="t" style="left:2338.35px;top:1735.59px;font-size:28.6px;line-height:28.6px;color:#98a6b8;letter-spacing:0.481px;-webkit-text-stroke:0.35px #98a6b8;">Statistik</span><span class="t" style="left:2452.07px;top:1733.56px;font-size:31px;line-height:31px;color:#1a91d6;font-weight:700;letter-spacing:1.100px;">39</span><span class="t" style="left:2846.45px;top:1735.59px;font-size:28.6px;line-height:28.6px;color:#98a6b8;letter-spacing:0.495px;-webkit-text-stroke:0.35px #98a6b8;">Marketing</span><span class="t" style="left:2983.38px;top:1733.56px;font-size:31px;line-height:31px;color:#1a91d6;font-weight:700;letter-spacing:1.100px;">39</span><span class="t" style="left:3356.07px;top:1735.59px;font-size:28.6px;line-height:28.6px;color:#98a6b8;letter-spacing:0.137px;-webkit-text-stroke:0.35px #98a6b8;">Unklassifiziert</span><span class="t" style="left:3543.38px;top:1733.56px;font-size:31px;line-height:31px;color:#1a91d6;font-weight:700;letter-spacing:1.100px;">39</span><div class="sep" style="top:1810px"></div><span class="t" style="left:850.69px;top:1835.96px;font-size:32.3px;line-height:32.3px;color:#000;letter-spacing:-0.648px;-webkit-text-stroke:0.35px #000;">24.12.2025</span><span class="t" style="left:850.35px;top:1881.27px;font-size:27.8px;line-height:27.8px;color:#75849a;letter-spacing:2.041px;-webkit-text-stroke:0.35px #75849a;">Mittwoch</span><span class="t" style="left:1828.85px;top:1857.59px;font-size:28.6px;line-height:28.6px;color:#98a6b8;letter-spacing:0.546px;-webkit-text-stroke:0.35px #98a6b8;">Erforderlich</span><span class="t" style="left:1988.00px;top:1855.56px;font-size:31px;line-height:31px;color:#1a91d6;font-weight:700;letter-spacing:1.100px;">90</span><span class="t" style="left:2338.35px;top:1857.59px;font-size:28.6px;line-height:28.6px;color:#98a6b8;letter-spacing:0.481px;-webkit-text-stroke:0.35px #98a6b8;">Statistik</span><span class="t" style="left:2452.07px;top:1855.56px;font-size:31px;line-height:31px;color:#1a91d6;font-weight:700;letter-spacing:1.100px;">37</span><span class="t" style="left:2846.45px;top:1857.59px;font-size:28.6px;line-height:28.6px;color:#98a6b8;letter-spacing:0.495px;-webkit-text-stroke:0.35px #98a6b8;">Marketing</span><span class="t" style="left:2983.38px;top:1855.56px;font-size:31px;line-height:31px;color:#1a91d6;font-weight:700;letter-spacing:1.100px;">37</span><span class="t" style="left:3356.07px;top:1857.59px;font-size:28.6px;line-height:28.6px;color:#98a6b8;letter-spacing:0.137px;-webkit-text-stroke:0.35px #98a6b8;">Unklassifiziert</span><span class="t" style="left:3543.38px;top:1855.56px;font-size:31px;line-height:31px;color:#1a91d6;font-weight:700;letter-spacing:1.100px;">37</span><div class="sep" style="top:1932px"></div><span class="t" style="left:850.69px;top:1957.96px;font-size:32.3px;line-height:32.3px;color:#000;letter-spacing:-0.537px;-webkit-text-stroke:0.35px #000;">25.12.2025</span><span class="t" style="left:850.35px;top:2003.27px;font-size:27.8px;line-height:27.8px;color:#75849a;letter-spacing:0.916px;-webkit-text-stroke:0.35px #75849a;">Donnerstag</span><span class="t" style="left:1828.85px;top:1979.59px;font-size:28.6px;line-height:28.6px;color:#98a6b8;letter-spacing:0.546px;-webkit-text-stroke:0.35px #98a6b8;">Erforderlich</span><span class="t" style="left:1987.12px;top:1977.56px;font-size:31px;line-height:31px;color:#1a91d6;font-weight:700;letter-spacing:1.100px;">121</span><span class="t" style="left:2338.35px;top:1979.59px;font-size:28.6px;line-height:28.6px;color:#98a6b8;letter-spacing:0.481px;-webkit-text-stroke:0.35px #98a6b8;">Statistik</span><span class="t" style="left:2451.82px;top:1977.56px;font-size:31px;line-height:31px;color:#1a91d6;font-weight:700;letter-spacing:1.100px;">51</span><span class="t" style="left:2846.45px;top:1979.59px;font-size:28.6px;line-height:28.6px;color:#98a6b8;letter-spacing:0.495px;-webkit-text-stroke:0.35px #98a6b8;">Marketing</span><span class="t" style="left:2983.12px;top:1977.56px;font-size:31px;line-height:31px;color:#1a91d6;font-weight:700;letter-spacing:1.100px;">51</span><span class="t" style="left:3356.07px;top:1979.59px;font-size:28.6px;line-height:28.6px;color:#98a6b8;letter-spacing:0.137px;-webkit-text-stroke:0.35px #98a6b8;">Unklassifiziert</span><span class="t" style="left:3543.12px;top:1977.56px;font-size:31px;line-height:31px;color:#1a91d6;font-weight:700;letter-spacing:1.100px;">51</span><div class="sep" style="top:2054px"></div><span class="t" style="left:850.69px;top:2079.96px;font-size:32.3px;line-height:32.3px;color:#000;letter-spacing:-0.648px;-webkit-text-stroke:0.35px #000;">26.12.2025</span><span class="t" style="left:850.35px;top:2125.27px;font-size:27.8px;line-height:27.8px;color:#75849a;letter-spacing:0.907px;-webkit-text-stroke:0.35px #75849a;">Freitag</span><span class="t" style="left:1828.85px;top:2101.59px;font-size:28.6px;line-height:28.6px;color:#98a6b8;letter-spacing:0.546px;-webkit-text-stroke:0.35px #98a6b8;">Erforderlich</span><span class="t" style="left:1987.12px;top:2099.56px;font-size:31px;line-height:31px;color:#1a91d6;font-weight:700;letter-spacing:1.100px;">101</span><span class="t" style="left:2338.35px;top:2101.59px;font-size:28.6px;line-height:28.6px;color:#98a6b8;letter-spacing:0.481px;-webkit-text-stroke:0.35px #98a6b8;">Statistik</span><span class="t" style="left:2451.70px;top:2099.56px;font-size:31px;line-height:31px;color:#1a91d6;font-weight:700;letter-spacing:1.100px;">28</span><span class="t" style="left:2846.45px;top:2101.59px;font-size:28.6px;line-height:28.6px;color:#98a6b8;letter-spacing:0.495px;-webkit-text-stroke:0.35px #98a6b8;">Marketing</span><span class="t" style="left:2983.00px;top:2099.56px;font-size:31px;line-height:31px;color:#1a91d6;font-weight:700;letter-spacing:1.100px;">28</span><span class="t" style="left:3356.07px;top:2101.59px;font-size:28.6px;line-height:28.6px;color:#98a6b8;letter-spacing:0.137px;-webkit-text-stroke:0.35px #98a6b8;">Unklassifiziert</span><span class="t" style="left:3543.00px;top:2099.56px;font-size:31px;line-height:31px;color:#1a91d6;font-weight:700;letter-spacing:1.100px;">28</span><div class="sep" style="top:2176px"></div><span class="t" style="left:850.69px;top:2201.96px;font-size:32.3px;line-height:32.3px;color:#000;letter-spacing:-1.093px;-webkit-text-stroke:0.35px #000;">27.12.2025</span><span class="t" style="left:851.35px;top:2247.27px;font-size:27.8px;line-height:27.8px;color:#3ebff8;letter-spacing:0.543px;-webkit-text-stroke:0.35px #3ebff8;">Samstag</span><span class="t" style="left:1828.85px;top:2223.59px;font-size:28.6px;line-height:28.6px;color:#98a6b8;letter-spacing:0.546px;-webkit-text-stroke:0.35px #98a6b8;">Erforderlich</span><span class="t" style="left:1988.12px;top:2221.56px;font-size:31px;line-height:31px;color:#1a91d6;font-weight:700;letter-spacing:1.100px;">80</span><span class="t" style="left:2338.35px;top:2223.59px;font-size:28.6px;line-height:28.6px;color:#98a6b8;letter-spacing:0.481px;-webkit-text-stroke:0.35px #98a6b8;">Statistik</span><span class="t" style="left:2451.70px;top:2221.56px;font-size:31px;line-height:31px;color:#1a91d6;font-weight:700;letter-spacing:1.100px;">27</span><span class="t" style="left:2846.45px;top:2223.59px;font-size:28.6px;line-height:28.6px;color:#98a6b8;letter-spacing:0.495px;-webkit-text-stroke:0.35px #98a6b8;">Marketing</span><span class="t" style="left:2983.00px;top:2221.56px;font-size:31px;line-height:31px;color:#1a91d6;font-weight:700;letter-spacing:1.100px;">27</span><span class="t" style="left:3356.07px;top:2223.59px;font-size:28.6px;line-height:28.6px;color:#98a6b8;letter-spacing:0.137px;-webkit-text-stroke:0.35px #98a6b8;">Unklassifiziert</span><span class="t" style="left:3543.00px;top:2221.56px;font-size:31px;line-height:31px;color:#1a91d6;font-weight:700;letter-spacing:1.100px;">27</span><div class="sep" style="top:2298px"></div><span class="t" style="left:850.69px;top:2323.96px;font-size:32.3px;line-height:32.3px;color:#000;letter-spacing:-0.593px;-webkit-text-stroke:0.35px #000;">28.12.2025</span><span class="t" style="left:851.35px;top:2369.27px;font-size:27.8px;line-height:27.8px;color:#3ebff8;letter-spacing:0.732px;-webkit-text-stroke:0.35px #3ebff8;">Sonntag</span><span class="t" style="left:1828.85px;top:2345.59px;font-size:28.6px;line-height:28.6px;color:#98a6b8;letter-spacing:0.546px;-webkit-text-stroke:0.35px #98a6b8;">Erforderlich</span><span class="t" style="left:1987.12px;top:2343.56px;font-size:31px;line-height:31px;color:#1a91d6;font-weight:700;letter-spacing:1.100px;">16</span><span class="t" style="left:2338.35px;top:2345.59px;font-size:28.6px;line-height:28.6px;color:#98a6b8;letter-spacing:0.481px;-webkit-text-stroke:0.35px #98a6b8;">Statistik</span><span class="t" style="left:2451.82px;top:2343.56px;font-size:31px;line-height:31px;color:#1a91d6;font-weight:700;letter-spacing:1.100px;">5</span><span class="t" style="left:2846.45px;top:2345.59px;font-size:28.6px;line-height:28.6px;color:#98a6b8;letter-spacing:0.495px;-webkit-text-stroke:0.35px #98a6b8;">Marketing</span><span class="t" style="left:2983.12px;top:2343.56px;font-size:31px;line-height:31px;color:#1a91d6;font-weight:700;letter-spacing:1.100px;">5</span><span class="t" style="left:3356.07px;top:2345.59px;font-size:28.6px;line-height:28.6px;color:#98a6b8;letter-spacing:0.137px;-webkit-text-stroke:0.35px #98a6b8;">Unklassifiziert</span><span class="t" style="left:3543.12px;top:2343.56px;font-size:31px;line-height:31px;color:#1a91d6;font-weight:700;letter-spacing:1.100px;">5</span><div class="sep" style="top:2420px"></div><span class="t" style="left:850.69px;top:2445.96px;font-size:32.3px;line-height:32.3px;color:#000;letter-spacing:-0.593px;-webkit-text-stroke:0.35px #000;">29.12.2025</span><span class="t" style="left:850.35px;top:2491.27px;font-size:27.8px;line-height:27.8px;color:#75849a;letter-spacing:1.448px;-webkit-text-stroke:0.35px #75849a;">Montag</span><span class="t" style="left:1828.85px;top:2467.59px;font-size:28.6px;line-height:28.6px;color:#98a6b8;letter-spacing:0.546px;-webkit-text-stroke:0.35px #98a6b8;">Erforderlich</span><span class="t" style="left:1987.12px;top:2465.56px;font-size:31px;line-height:31px;color:#1a91d6;font-weight:700;letter-spacing:1.100px;">108</span><span class="t" style="left:2338.35px;top:2467.59px;font-size:28.6px;line-height:28.6px;color:#98a6b8;letter-spacing:0.481px;-webkit-text-stroke:0.35px #98a6b8;">Statistik</span><span class="t" style="left:2452.32px;top:2465.56px;font-size:31px;line-height:31px;color:#1a91d6;font-weight:700;letter-spacing:1.100px;">44</span><span class="t" style="left:2846.45px;top:2467.59px;font-size:28.6px;line-height:28.6px;color:#98a6b8;letter-spacing:0.495px;-webkit-text-stroke:0.35px #98a6b8;">Marketing</span><span class="t" style="left:2983.62px;top:2465.56px;font-size:31px;line-height:31px;color:#1a91d6;font-weight:700;letter-spacing:1.100px;">44</span><span class="t" style="left:3356.07px;top:2467.59px;font-size:28.6px;line-height:28.6px;color:#98a6b8;letter-spacing:0.137px;-webkit-text-stroke:0.35px #98a6b8;">Unklassifiziert</span><span class="t" style="left:3543.62px;top:2465.56px;font-size:31px;line-height:31px;color:#1a91d6;font-weight:700;letter-spacing:1.100px;">44</span><div class="sep" style="top:2542px"></div><span class="t" style="left:851.19px;top:2567.96px;font-size:32.3px;line-height:32.3px;color:#000;letter-spacing:-0.371px;-webkit-text-stroke:0.35px #000;">30.12.2025</span><span class="t" style="left:850.35px;top:2613.27px;font-size:27.8px;line-height:27.8px;color:#75849a;letter-spacing:0.749px;-webkit-text-stroke:0.35px #75849a;">Dienstag</span><span class="t" style="left:1828.85px;top:2589.59px;font-size:28.6px;line-height:28.6px;color:#98a6b8;letter-spacing:0.546px;-webkit-text-stroke:0.35px #98a6b8;">Erforderlich</span><span class="t" style="left:1987.12px;top:2587.56px;font-size:31px;line-height:31px;color:#1a91d6;font-weight:700;letter-spacing:1.100px;">113</span><span class="t" style="left:2338.35px;top:2589.59px;font-size:28.6px;line-height:28.6px;color:#98a6b8;letter-spacing:0.481px;-webkit-text-stroke:0.35px #98a6b8;">Statistik</span><span class="t" style="left:2451.82px;top:2587.56px;font-size:31px;line-height:31px;color:#1a91d6;font-weight:700;letter-spacing:1.100px;">51</span><span class="t" style="left:2846.45px;top:2589.59px;font-size:28.6px;line-height:28.6px;color:#98a6b8;letter-spacing:0.495px;-webkit-text-stroke:0.35px #98a6b8;">Marketing</span><span class="t" style="left:2983.12px;top:2587.56px;font-size:31px;line-height:31px;color:#1a91d6;font-weight:700;letter-spacing:1.100px;">51</span><span class="t" style="left:3356.07px;top:2589.59px;font-size:28.6px;line-height:28.6px;color:#98a6b8;letter-spacing:0.137px;-webkit-text-stroke:0.35px #98a6b8;">Unklassifiziert</span><span class="t" style="left:3543.12px;top:2587.56px;font-size:31px;line-height:31px;color:#1a91d6;font-weight:700;letter-spacing:1.100px;">51</span><div class="sep" style="top:2664px"></div><span class="t" style="left:851.19px;top:2689.96px;font-size:32.3px;line-height:32.3px;color:#000;letter-spacing:-1.649px;-webkit-text-stroke:0.35px #000;">31.12.2025</span><span class="t" style="left:850.35px;top:2735.27px;font-size:27.8px;line-height:27.8px;color:#75849a;letter-spacing:2.041px;-webkit-text-stroke:0.35px #75849a;">Mittwoch</span><span class="t" style="left:1828.85px;top:2711.59px;font-size:28.6px;line-height:28.6px;color:#98a6b8;letter-spacing:0.546px;-webkit-text-stroke:0.35px #98a6b8;">Erforderlich</span><span class="t" style="left:1987.88px;top:2709.56px;font-size:31px;line-height:31px;color:#1a91d6;font-weight:700;letter-spacing:1.100px;">67</span><span class="t" style="left:2338.35px;top:2711.59px;font-size:28.6px;line-height:28.6px;color:#98a6b8;letter-spacing:0.481px;-webkit-text-stroke:0.35px #98a6b8;">Statistik</span><span class="t" style="left:2451.70px;top:2709.56px;font-size:31px;line-height:31px;color:#1a91d6;font-weight:700;letter-spacing:1.100px;">24</span><span class="t" style="left:2846.45px;top:2711.59px;font-size:28.6px;line-height:28.6px;color:#98a6b8;letter-spacing:0.495px;-webkit-text-stroke:0.35px #98a6b8;">Marketing</span><span class="t" style="left:2983.00px;top:2709.56px;font-size:31px;line-height:31px;color:#1a91d6;font-weight:700;letter-spacing:1.100px;">24</span><span class="t" style="left:3356.07px;top:2711.59px;font-size:28.6px;line-height:28.6px;color:#98a6b8;letter-spacing:0.137px;-webkit-text-stroke:0.35px #98a6b8;">Unklassifiziert</span><span class="t" style="left:3543.00px;top:2709.56px;font-size:31px;line-height:31px;color:#1a91d6;font-weight:700;letter-spacing:1.100px;">24</span><div class="sep" style="top:2786px"></div></div>
</body></html>
